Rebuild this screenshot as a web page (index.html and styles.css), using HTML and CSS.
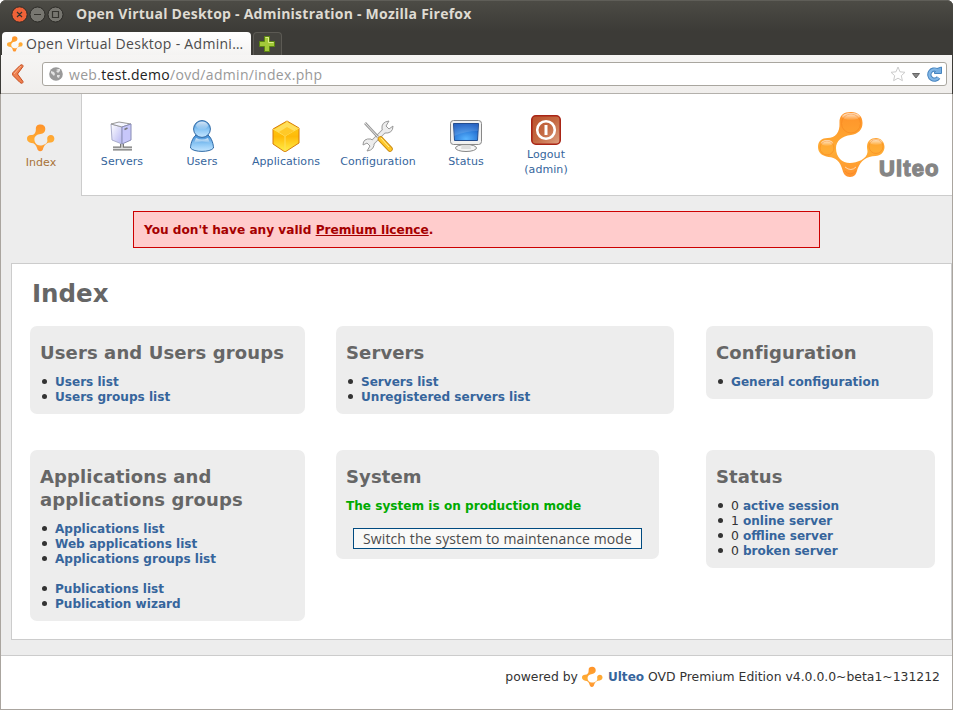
FILE: index.html
```html
<!DOCTYPE html>
<html lang="en">
<head>
<meta charset="utf-8">
<title>Open Virtual Desktop - Administration</title>
<link rel="stylesheet" href="styles.css">
</head>
<body>
<svg class="defs" width="0" height="0" aria-hidden="true">
  <defs>
    <linearGradient id="orange" x1="0" y1="0" x2="0" y2="1"><stop offset="0" stop-color="#ff9229"/><stop offset=".6" stop-color="#ffad35"/><stop offset="1" stop-color="#ff9330"/></linearGradient>
    <linearGradient id="shine" x1="0" y1="0" x2="0" y2="1"><stop offset="0" stop-color="#fff" stop-opacity=".8"/><stop offset="1" stop-color="#fff" stop-opacity=".05"/></linearGradient>
    <linearGradient id="blue" x1="0" y1="0" x2="0" y2="1"><stop offset="0" stop-color="#3d8bd5"/><stop offset=".55" stop-color="#8cc7f5"/><stop offset="1" stop-color="#c5e6ff"/></linearGradient>
    <linearGradient id="box" x1="0" y1="0" x2="1" y2="1"><stop offset="0" stop-color="#fff"/><stop offset="1" stop-color="#b5b5f2"/></linearGradient>
    <linearGradient id="gold" x1="0" y1="0" x2="0" y2="1"><stop offset="0" stop-color="#ffd21a"/><stop offset=".5" stop-color="#ffba08"/><stop offset="1" stop-color="#fff04a"/></linearGradient>
    <radialGradient id="screen" cx=".5" cy=".9" r=".9"><stop offset="0" stop-color="#58b4ff"/><stop offset="1" stop-color="#0a4fbc"/></radialGradient>
    <linearGradient id="rust" x1="0" y1="0" x2="1" y2="1"><stop offset="0" stop-color="#b9502c"/><stop offset=".5" stop-color="#c56a43"/><stop offset="1" stop-color="#dfa283"/></linearGradient>
    <symbol id="ulteo" viewBox="0 0 68 68">
      <path fill="url(#orange)" d="M21.500 12C21 4 26 1 33 1s11.500 4 11.500 11S40 23 33 24c-9 1-15 6-15 13 0 9 6 15 14 15 7 0 17-4 17.500-11 0-2-.5-3-.5-5 0-6 4-9 9-9s8.500 4 8.500 9-4 9-9 9c-9 0-15 5-18 13-1 5-3 8-7.500 8s-6.500-3-7.500-7c-2-8-7-13-14-13-6-1-10.500-4-10.500-10s4-9 9.500-9c8 0 12.500-6 12-15z"/>
    </symbol>
  </defs>
</svg>
<div class="window">
  <div class="titlebar">
    <svg class="controls" width="54" height="18" viewBox="0 0 54 18">
      <g stroke="#2c2b27"><circle cx="9.500" cy="9.500" r="7.700" fill="#ef6238"/><circle cx="27.500" cy="9.500" r="7.500" fill="#777670"/><circle cx="45.500" cy="9.500" r="7.500" fill="#777670"/></g>
      <path d="M7 7l5 5m0-5l-5 5M24 9.500h7M42.500 6.500h6v6h-6z" fill="none" stroke="#34332e" stroke-width="1.200"/>
    </svg>
    <span class="window-title">Open Virtual Desktop - Administration - Mozilla Firefox</span>
  </div>
  <div class="tabs">
    <div class="tab"><svg width="16" height="16"><use href="#ulteo"/></svg><span>Open Virtual Desktop - Admini…</span></div>
    <div class="newtab"><svg width="16" height="16" viewBox="0 0 16 16"><path d="M5.500.5h5v5h5v5h-5v5h-5v-5h-5v-5h5z" fill="#a3c93a" stroke="#5b8610"/><path d="M6.500 1.500h3v5h5" fill="none" stroke="#dcec8c"/></svg></div>
  </div>
  <div class="toolbar">
    <svg class="back" width="14" height="22" viewBox="0 0 14 22"><path d="M9 2.500q3-2 3 1L6.500 11l5.500 7.500q0 3-3 1L2 12.500q-1-1.500 0-3z" fill="#ee8050" stroke="#c64b1d"/><path d="M10 3L3 11" stroke="#f8b48c" fill="none"/></svg>
    <div class="address">
      <svg width="14" height="14" viewBox="0 0 14 14"><circle cx="7" cy="7" r="6.800" fill="#999"/><path d="M2 4l3 1 1 2-1 2-1-1-2-2zM7 2l2 1-2 1 2 2 2-2V2zM8 8l3 0-1 3-2-1z" fill="#e2e2e2"/></svg>
      <span class="url">web.<b>test.demo</b>/ovd/admin/index.php</span>
      <svg class="star" width="16" height="16" viewBox="0 0 16 16"><path d="M8 1l2 4.800 5 .5-3.700 3.400 1.100 5L8 12.200l-4.400 2.500 1.100-5L1 6.300l5-.5z" fill="#fff" stroke="#ccc"/></svg>
      <svg class="caret" width="8" height="6" viewBox="0 0 8 6"><path d="M.5.500h7L4 5z" fill="#888" stroke="#666"/></svg>
      <svg class="reload" width="16" height="16" viewBox="0 0 16 16"><path d="M11 4.300A5 5 0 1 0 12.500 11.500" fill="none" stroke="#4684bf" stroke-width="4.400"/><path d="M8.500 7.500V6l2-1.500L9.500 3 15.500 1v6.500z" fill="#75aee2" stroke="#4684bf"/><path d="M11 4.300A5 5 0 1 0 12.300 11.700" fill="none" stroke="#80b5e5" stroke-width="2.400"/></svg>
    </div>
  </div>
  <div class="page">
    <header>
      <div class="item index"><svg width="28" height="28"><use href="#ulteo"/></svg><span>Index</span></div>
      <nav>
        <a class="item servers"><svg width="32" height="32" viewBox="0 0 32 32"><path d="M16 24v5M7 28.500h19" stroke="#777" stroke-width="4"/><path d="M7 28.500h19M16 23v5" stroke="#ddd" stroke-width="1.500"/><path d="M5 4l11 3v17L6 20z" fill="url(#box)" stroke="#aaaecc"/><path d="M5 4l8-2 12 2-9 3z" fill="#f4f5ff" stroke="#999"/><path d="M16 7l9-3v16l-9 4z" fill="#c7c7fa" stroke="#888cb5"/><path d="M18.500 9.500l3-1.500" stroke="#777" stroke-width="1.500"/></svg><span>Servers</span></a>
        <a class="item users"><svg width="32" height="32" viewBox="0 0 32 32"><path d="M10 15C6 18 4.500 25 4.500 28c3 4.500 20 4.500 23 0 0-3-1.500-10-5.500-13z" fill="url(#blue)" stroke="#2f69a5"/><circle cx="16" cy="9" r="8.400" fill="url(#blue)" stroke="#2f69a5"/><ellipse cx="16" cy="5.500" rx="6" ry="4" fill="url(#shine)"/><path d="M10 18q6 3 12 0l2 5q-8-3-16 0z" fill="url(#shine)"/></svg><span>Users</span></a>
        <a class="item apps"><svg width="32" height="32" viewBox="0 0 32 32"><path d="M17 1l12 7v15L15 32 3 24V9z" fill="url(#gold)" stroke="#d67b0c"/><path d="M4 9.500L17 2l11 6-13 8z" fill="#ffdf5b"/><path d="M15 16v15M3 9l12 7 14-8M17 1v6L8 11m9-4l8 3" fill="none" stroke="#ffdf60"/><path d="M17 7l-8 5 6 4 9-5z" fill="#ffc928"/></svg><span>Applications</span></a>
        <a class="item config"><svg width="32" height="32" viewBox="0 0 32 32"><path d="M8 25L24 9" stroke="#999" stroke-width="5"/><path d="M20 9q-1-7 7-8l-3 5 3 3 4-3q0 8-9 7zM12 22q1 8-7 9l3-5-3-3-4 2q0-7 8-6z" fill="#eee" stroke="#999"/><path d="M8 25L24 9" stroke="#ededed" stroke-width="3.400"/><path d="M3 3l13 14" stroke="#999" stroke-width="2.600"/><path d="M3 3l13 14" stroke="#e6e6e6"/><path d="M18.500 19l9.500 10" stroke="#cc8d14" stroke-width="5.600" stroke-linecap="round"/><path d="M18.500 19l9.500 10" stroke="#ffc82a" stroke-width="3.800" stroke-linecap="round"/><path d="M19 18l8 9" stroke="#fff1a0"/></svg><span>Configuration</span></a>
        <a class="item status"><svg width="32" height="32" viewBox="0 0 32 32"><ellipse cx="16" cy="28" rx="10.500" ry="3.500" fill="#f5f5f5" stroke="#888"/><path d="M12 24h8l1 5H11z" fill="#ddd"/><rect x=".5" y=".5" width="31" height="24" rx="3" fill="#f1f1f1" stroke="#888"/><path d="M3.500 3.500h25l-1 17h-23z" fill="url(#screen)" stroke="#244d8e"/><path d="M4 4h24v7q-12 0-24 5z" fill="#fff" opacity=".13"/></svg><span>Status</span></a>
        <a class="item logout"><svg width="30" height="30" viewBox="0 0 30 30"><rect x=".8" y=".8" width="28.400" height="28.400" rx="4" fill="url(#rust)" stroke="#a92516" stroke-width="1.600"/><circle cx="15" cy="15" r="8.800" fill="none" stroke="#fff" stroke-width="2.600"/><path d="M15 10v10" stroke="#fff" stroke-width="3"/></svg><span>Logout<br>(admin)</span></a>
        <div class="brand">
          <svg width="68" height="68" viewBox="0 0 68 68"><use href="#ulteo"/><g fill="url(#shine)"><ellipse cx="33" cy="5.500" rx="9" ry="3.500"/><ellipse cx="9" cy="32" rx="6" ry="3"/><ellipse cx="58" cy="31" rx="6.500" ry="3"/></g><g fill="none" stroke="#f47b17" opacity=".4"><circle cx="33" cy="12.500" r="9.500"/><circle cx="9" cy="37" r="7"/><circle cx="58" cy="35.500" r="7"/><path d="M27 60q5 6 11 0"/></g><path d="M27 56q6 5 11 0" fill="none" stroke="#fff" opacity=".6"/></svg>
          <span>Ulteo</span>
        </div>
      </nav>
    </header>
    <div class="alert">You don't have any valid <u>Premium licence</u>.</div>
    <main>
      <h1>Index</h1>
      <div class="grid">
        <section class="card"><h2>Users and Users groups</h2><ul><li><a>Users list</a></li><li><a>Users groups list</a></li></ul></section>
        <section class="card"><h2>Servers</h2><ul><li><a>Servers list</a></li><li><a>Unregistered servers list</a></li></ul></section>
        <section class="card w-config"><h2>Configuration</h2><ul><li><a>General configuration</a></li></ul></section>
        <section class="card"><h2>Applications and applications groups</h2><ul><li><a>Applications list</a></li><li><a>Web applications list</a></li><li><a>Applications groups list</a></li><li class="gap"><a>Publications list</a></li><li><a>Publication wizard</a></li></ul></section>
        <section class="card w-system"><h2>System</h2><p>The system is on production mode</p><button>Switch the system to maintenance mode</button></section>
        <section class="card w-status"><h2>Status</h2><ul><li>0 <a>active session</a></li><li>1 <a>online server</a></li><li>0 <a>offline server</a></li><li>0 <a>broken server</a></li></ul></section>
      </div>
    </main>
    <footer><span>powered by</span><svg width="21" height="22"><use href="#ulteo"/></svg><span><a>Ulteo</a> OVD Premium Edition v4.0.0.0~beta1~131212</span></footer>
  </div>
</div>
</body>
</html>
```
FILE: styles.css
```css
* { box-sizing: border-box; }
body { margin: 0; background: #fff; color: #333; font: 12.4px/15px "DejaVu Sans", sans-serif; }
svg { display: block; flex: none; }
.defs { position: absolute; }
.window { width: 953px; height: 710px; background: #3c3b37; border-radius: 6px 6px 0 0; display: flex; flex-direction: column; }

.titlebar { height: 31px; border-top: 1px solid #5f5e58; border-radius: 6px 6px 0 0; background: linear-gradient(#4c4b45, #3c3b37); display: flex; align-items: flex-start; padding: 4px 0 0 10px; }
.window-title { margin: 0 0 0 12px; font: bold 14px/17px "Open Sans", sans-serif; letter-spacing: .24px; color: #dfdbd2; white-space: nowrap; }
.tabs { height: 24px; display: flex; padding: 1px 0 0 2px; font: 14px/22px "Open Sans", sans-serif; }
.tab { width: 249px; height: 23px; display: flex; align-items: center; gap: 3px; padding-left: 5px; border-radius: 4px 4px 0 0; background: linear-gradient(#fff, #f4f3f2); color: #4c4c4c; letter-spacing: .3px; white-space: nowrap; }
.newtab { width: 29px; height: 23px; margin-left: 2px; padding: 3px 0 0 5px; border: 1px solid #5c5a54; border-bottom: 0; border-radius: 4px 4px 0 0; background: #44433e; }
.toolbar { height: 39px; margin: 0 1px; display: flex; background: linear-gradient(#f6f5f4, #f0eeec); border-bottom: 1px solid #b3b0ab; padding: 7px 5px 0 10px; }
.back { margin-top: 1px; }
.address { flex: 1; height: 24px; margin-left: 17px; padding: 0 4px 0 6px; display: flex; align-items: center; background: #fff; border: 1px solid #a9a69f; border-radius: 3px; }
.url { flex: 1; margin: 1px 0 0 6px; font: 14px/20px "Open Sans", sans-serif; letter-spacing: .31px; color: #999; }
.url b { font-weight: normal; color: #222; }
.caret { margin: 3px 6px 0 6px; }

.page { flex: 1; display: flex; flex-direction: column; background: #ededed; border: 1px solid #aaa59f; border-top: 0; }
header { height: 102px; display: flex; }
.item { display: flex; flex-direction: column; align-items: center; font-size: 11px; line-height: 15px; letter-spacing: .07px; color: #36659c; text-align: center; }
.index { width: 80px; padding-top: 30px; color: #a87236; }
.index span { margin-top: 3px; }
nav { flex: 1; display: flex; background: #fff; border: solid #ccc; border-width: 0 0 1px 1px; padding: 26px 0 0; }
nav .item span { margin-top: 2px; }
.servers { width: 80px; }
.users { width: 80px; }
.apps { width: 88px; }
.config { width: 96px; }
.status { width: 80px; }
.logout { width: 80px; margin-top: -5px; }
.brand { margin: -10px 0 0 232px; display: flex; align-items: flex-end; height: 69px; }
.brand span { margin: 0 0 -1px -7px; font: bold 22px/22px "Liberation Sans", sans-serif; letter-spacing: 1.1px; color: #858585; -webkit-text-stroke: 1.3px #858585; }

.alert { width: 687px; height: 37px; margin: 15px 0 0 132px; padding: 11px 10px 9px; border: 1px solid #c00; background: #fcc; color: #a50000; font-size: 12.13px; font-weight: bold; }
main { height: 377px; margin: 15px 0 0 10px; padding: 15px 0 0 18px; background: #fff; border: 1px solid #ccc; }
h1 { margin: 0 0 18px 2px; font-size: 24.5px; line-height: 29px; color: #666; }
.grid { display: grid; grid-template-columns: 275px 338px 229px; column-gap: 31px; row-gap: 36px; align-items: start; }
.card { padding: 15px 10px 10px; border-radius: 7px; background: #ededed; }
.w-config, .w-status { width: 229px; margin-left: 1px; }
.w-config { width: 227px; }
.w-system { width: 323px; }
h2 { margin: 0 0 10px; font-size: 18px; line-height: 23px; letter-spacing: .12px; color: #666; }
ul { margin: 0; padding: 0 0 0 15px; list-style: none; }
li { display: flex; align-items: center; gap: 4px; height: 15px; }
li::before { content: ""; width: 5px; height: 5px; margin: 0 4px 0 -13px; border-radius: 50%; background: #333; }
li.gap { margin-top: 15px; }
a { color: #36659c; font-size: 12.07px; font-weight: bold; }
li a { padding-top: 2px; }
nav a.item { font-size: 11px; font-weight: normal; }
.card p { margin: 0; padding-top: 1px; font-size: 12.1px; font-weight: bold; color: #0a0; }
button { display: block; width: 289px; height: 21px; margin: 14px 0 0 7px; padding: 0; border: 1px solid #004a80; background: #f9f9f8; color: #4c4c4c; font: 14px/18px "Open Sans", sans-serif; letter-spacing: .12px; white-space: nowrap; }
footer { flex: 1; display: flex; align-items: flex-start; justify-content: flex-end; margin-top: 15px; padding: 10px 12px 0 0; background: #fff; border-top: 1px solid #ccc; }
footer svg { margin: 0 5px 0 4px; }
footer span { line-height: 22px; }
```
